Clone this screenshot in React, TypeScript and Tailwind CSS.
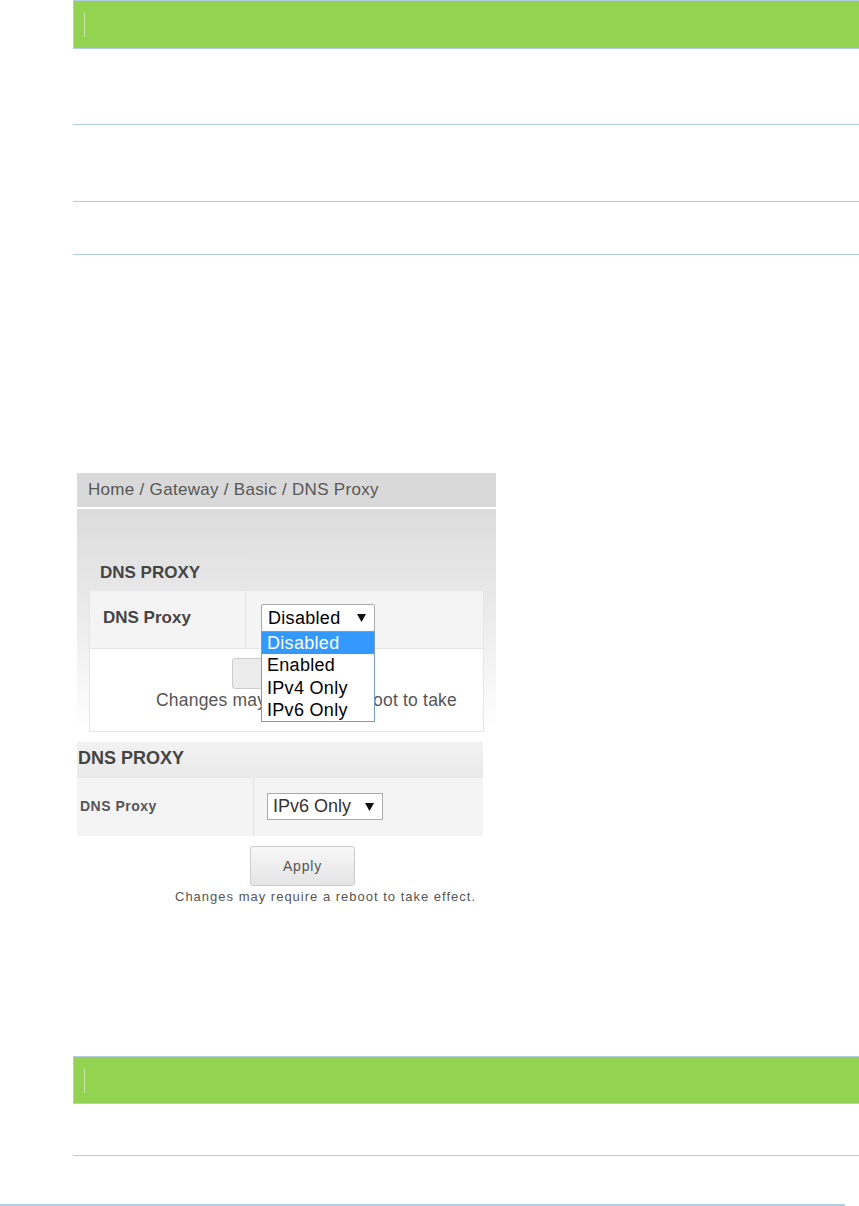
const arial = { fontFamily: '"Liberation Sans", Arial, sans-serif' };

function GreenBar() {
  return (
    <div className="ml-[73px] h-[49px] border border-r-0 border-[#b3cde0] bg-[#94d352] pl-[10px] pt-[12px]">
      <div className="h-[24px] w-px bg-[#c9e8a8]" />
    </div>
  );
}

function Caret() {
  return (
    <svg width="9" height="8" viewBox="0 0 9 8" className="shrink-0">
      <path d="M0 0 H9 L4.5 8 Z" fill="#111" />
    </svg>
  );
}

function ShotOne() {
  return (
    <div className="relative ml-[77px] h-[258px] w-[419px]" style={arial}>
      <div className="h-[34px] bg-[#d9d9d9] pl-[11px] pt-[7px] text-[17px] leading-[19px] tracking-[0.3px] text-[#575757]">
        Home / Gateway / Basic / DNS Proxy
      </div>
      <div className="ml-[11px] h-[2px] bg-white" />
      <div className="h-[222px] bg-gradient-to-b from-[#dcdcdc] via-[#ececec] to-white pl-[12px]">
        <div className="pl-[11px] pt-[54px] text-[17px] font-bold leading-[20px] text-[#444]">DNS PROXY</div>
        <div className="mt-[7px] w-[395px] border border-[#e6e6e6] bg-white">
          <div className="flex h-[58px] border-b border-[#e6e6e6] bg-[#f4f4f4]">
            <div className="w-[156px] border-r border-[#e6e6e6] pl-[13px] pt-[14px] text-[17px] font-bold text-[#444]">
              DNS Proxy
            </div>
            <div className="pl-[15px] pt-[13px]">
              <div className="flex h-[28px] w-[114px] items-center justify-between rounded-[2px] border border-[#a9a9a9] bg-white pl-[6px] pr-[8px] text-[18px] tracking-[0.3px] text-black">
                <span>Disabled</span>
                <Caret />
              </div>
            </div>
          </div>
          <div className="relative h-[82px] bg-white">
            <div className="absolute left-[142px] top-[9px] h-[31px] w-[110px] rounded-[3px] border border-[#ccc] bg-[#ececec]" />
            <div className="absolute left-[66px] top-[38px] whitespace-nowrap text-[17.5px] tracking-[0.2px] text-[#555]">
              Changes may require a reboot to take
            </div>
          </div>
        </div>
      </div>
      <div className="absolute left-[184px] top-[158px] w-[114px] border border-[#7a9cc8] bg-white text-[18px] leading-[22.3px] tracking-[0.3px] text-black">
        <div className="bg-[#3399ff] pl-[5px] text-white">Disabled</div>
        <div className="pl-[5px]">Enabled</div>
        <div className="pl-[5px]">IPv4 Only</div>
        <div className="pl-[5px]">IPv6 Only</div>
      </div>
    </div>
  );
}

function ShotTwo() {
  return (
    <div className="ml-[77px] mt-[11px] h-[168px] w-[406px] bg-white" style={arial}>
      <div className="h-[36px] bg-gradient-to-b from-[#f2f2f2] to-[#e9e9e9] pl-[1px] pt-[6px] text-[18px] font-bold leading-[21px] text-[#444]">
        DNS PROXY
      </div>
      <div className="flex h-[58px] bg-[#f4f4f4]">
        <div className="w-[177px] border-r border-[#e2e2e2] pl-[3px] pt-[18px] text-[14px] font-bold tracking-[0.5px] text-[#555]">
          DNS Proxy
        </div>
        <div className="pl-[13px] pt-[15px]">
          <div className="flex h-[27px] w-[116px] items-center justify-between border border-[#a9a9a9] bg-white pl-[5px] pr-[8px] text-[18px] text-[#333]">
            <span>IPv6 Only</span>
            <Caret />
          </div>
        </div>
      </div>
      <div className="pl-[173px] pt-[10px]">
        <div className="flex h-[40px] w-[105px] items-center justify-center rounded-[3px] border border-[#ccc] bg-gradient-to-b from-[#f8f8f8] to-[#e4e4e4] text-[14px] tracking-[0.8px] text-[#555]">
          Apply
        </div>
      </div>
      <div className="pl-[98px] pt-[3px] whitespace-nowrap text-[13px] leading-[16px] tracking-[1px] text-[#555]">
        Changes may require a reboot to take effect.
      </div>
    </div>
  );
}

export default function App() {
  return (
    <div className="relative h-[1206px] w-[859px] overflow-hidden bg-white">
      <GreenBar />
      <div className="ml-[73px] h-[76px] border-b border-[#b3cde0]" />
      <div className="ml-[73px] h-[77px] border-b border-[#b3cde0]" />
      <div className="ml-[73px] h-[53px] border-b border-[#b3cde0]" />
      <div className="h-[218px]" />
      <ShotOne />
      <ShotTwo />
      <div className="h-[146px]" />
      <div className="ml-[73px] h-[48px] border border-r-0 border-[#b3cde0] bg-[#94d352] pl-[10px] pt-[12px]">
        <div className="h-[24px] w-px bg-[#c9e8a8]" />
      </div>
      <div className="ml-[73px] h-[52px] border-b border-[#b3cde0]" />
      <div className="h-[48px]" />
      <div className="h-[2px] w-[845px] bg-[#b3cde0]" />
    </div>
  );
}
